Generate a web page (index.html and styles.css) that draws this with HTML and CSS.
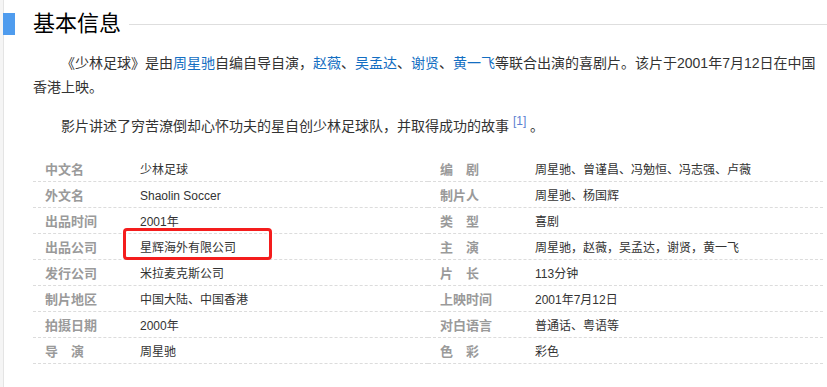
FILE: index.html
```html
<!DOCTYPE html>
<html lang="zh-CN">
<head>
<meta charset="utf-8">
<title>基本信息</title>
<link rel="stylesheet" href="styles.css">
</head>
<body>
<div class="page">
  <div class="title-row">
    <span class="title-bar"></span>
    <h2 class="title">基本信息</h2>
    <span class="title-line"></span>
  </div>
  <div class="content">
    <p class="para">《少林足球》是由<a class="link" href="#">周星驰</a>自编自导自演，<a class="link" href="#">赵薇</a>、<a class="link" href="#">吴孟达</a>、<a class="link" href="#">谢贤</a>、<a class="link" href="#">黄一飞</a>等联合出演的喜剧片。该片于2001年7月12日在中国香港上映。</p>
    <p class="para">影片讲述了穷苦潦倒却心怀功夫的星自创少林足球队，并取得成功的故事 <sup class="ref">[1]</sup> 。</p>
    <div class="info">
      <dl class="info-col">
        <div class="info-row"><dt class="info-name">中文名</dt><dd class="info-value">少林足球</dd></div>
        <div class="info-row"><dt class="info-name">外文名</dt><dd class="info-value">Shaolin Soccer</dd></div>
        <div class="info-row"><dt class="info-name">出品时间</dt><dd class="info-value">2001年</dd></div>
        <div class="info-row"><dt class="info-name">出品公司</dt><dd class="info-value info-marked">星辉海外有限公司</dd></div>
        <div class="info-row"><dt class="info-name">发行公司</dt><dd class="info-value">米拉麦克斯公司</dd></div>
        <div class="info-row"><dt class="info-name">制片地区</dt><dd class="info-value">中国大陆、中国香港</dd></div>
        <div class="info-row"><dt class="info-name">拍摄日期</dt><dd class="info-value">2000年</dd></div>
        <div class="info-row"><dt class="info-name">导　演</dt><dd class="info-value">周星驰</dd></div>
      </dl>
      <dl class="info-col">
        <div class="info-row"><dt class="info-name">编　剧</dt><dd class="info-value">周星驰、曾谨昌、冯勉恒、冯志强、卢薇</dd></div>
        <div class="info-row"><dt class="info-name">制片人</dt><dd class="info-value">周星驰、杨国辉</dd></div>
        <div class="info-row"><dt class="info-name">类　型</dt><dd class="info-value">喜剧</dd></div>
        <div class="info-row"><dt class="info-name">主　演</dt><dd class="info-value">周星驰，赵薇，吴孟达，谢贤，黄一飞</dd></div>
        <div class="info-row"><dt class="info-name">片　长</dt><dd class="info-value">113分钟</dd></div>
        <div class="info-row"><dt class="info-name">上映时间</dt><dd class="info-value">2001年7月12日</dd></div>
        <div class="info-row"><dt class="info-name">对白语言</dt><dd class="info-value">普通话、粤语等</dd></div>
        <div class="info-row"><dt class="info-name">色　彩</dt><dd class="info-value">彩色</dd></div>
      </dl>
    </div>
  </div>
</div>
</body>
</html>
```
FILE: styles.css
```css
html, body {
  margin: 0;
  padding: 0;
  background: #fff;
}

body {
  font-family: "Liberation Sans", "Noto Sans CJK SC", sans-serif;
  color: #333;
}

.page {
  min-height: 387px;
  box-sizing: border-box;
  padding-top: 13px;
  background: linear-gradient(to right, #f5f5f5 0, #f5f5f5 3px, #e4e4e4 3px, #e4e4e4 4px, #fff 4px);
}

.title-row {
  display: flex;
  align-items: center;
  height: 22px;
  padding-left: 3px;
}

.title-bar {
  width: 12px;
  height: 22px;
  background: #4f9cee;
  flex: none;
}

.title {
  margin: 0 0 0 18px;
  font-size: 22px;
  line-height: 22px;
  font-weight: normal;
  color: #000;
}

.title-line {
  flex: 1;
  height: 1px;
  background: #dedede;
  margin-left: 8px;
}

.content {
  padding: 0 4px 0 33px;
}

.para {
  margin: 16px 0 0;
  font-size: 14px;
  line-height: 24px;
  text-indent: 2em;
  color: #333;
}

.para + .para {
  margin-top: 15px;
}

.link {
  color: #136ec2;
  text-decoration: none;
}

.ref {
  font-size: 12px;
  line-height: 0;
  color: #5b7fd1;
  vertical-align: 6px;
}

.info {
  display: grid;
  grid-template-columns: 395px 395px;
  margin-top: 18px;
}

.info-col {
  margin: 0;
}

.info-row {
  display: flex;
  height: 25px;
  border-bottom: 1px dashed #dcdcdc;
}

.info-name,
.info-value {
  margin: 0;
  padding-top: 3px;
  line-height: 22px;
  white-space: nowrap;
}

.info-name {
  width: 95px;
  padding-left: 12px;
  font-size: 13px;
  font-weight: bold;
  color: #9a9a9a;
}

.info-value {
  font-size: 12px;
  color: #333;
}

.info-marked {
  position: relative;
}

.info-marked::after {
  content: "";
  position: absolute;
  left: -17px;
  top: -6px;
  width: 149px;
  height: 32px;
  box-sizing: border-box;
  border: 3px solid #f41d1d;
  border-radius: 4px;
}
```
